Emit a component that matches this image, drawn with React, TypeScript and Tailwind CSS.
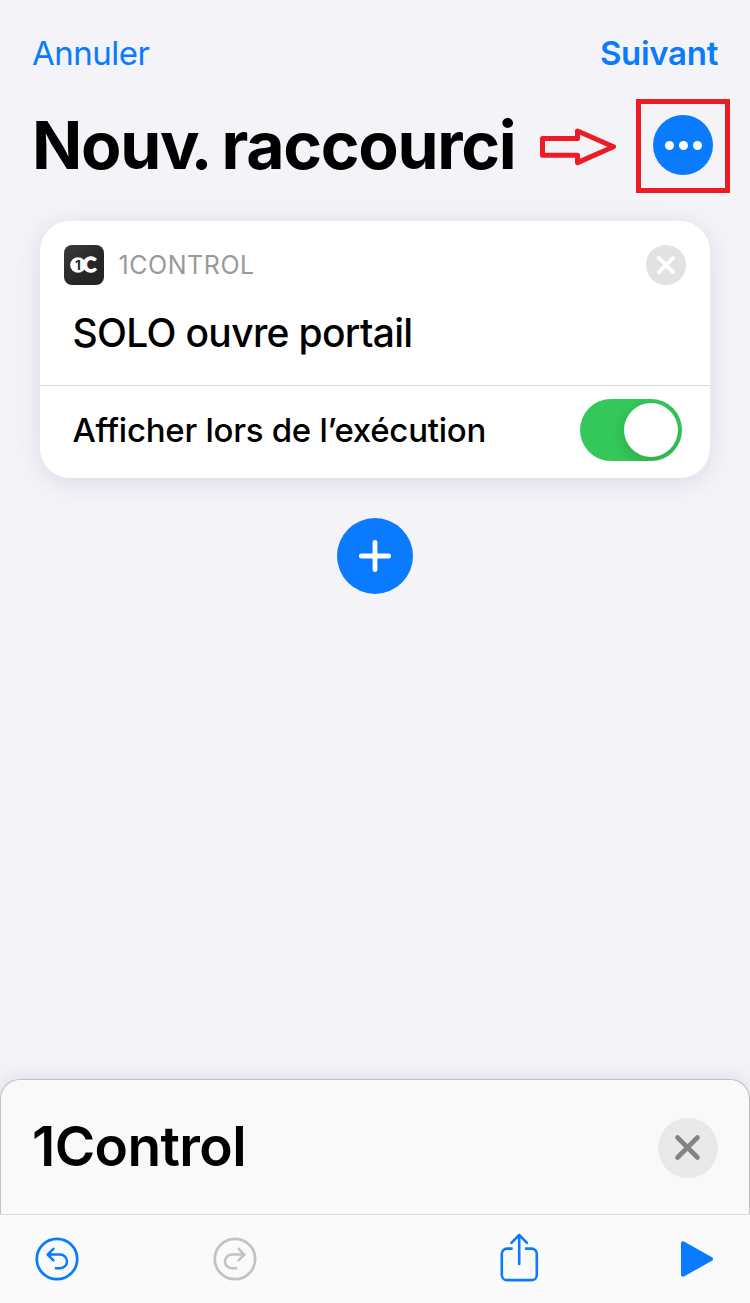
import { useState } from "react";

function AppIcon() {
  return (
    <svg viewBox="0 0 40 40" className="h-10 w-10 shrink-0">
      <defs>
        <linearGradient id="iconBg" x1="0" y1="0" x2="1" y2="1">
          <stop offset="0" stopColor="#3b3b3b" />
          <stop offset="0.6" stopColor="#262626" />
          <stop offset="1" stopColor="#232323" />
        </linearGradient>
      </defs>
      <rect width="40" height="40" rx="8" fill="url(#iconBg)" />
      <text x="18.8" y="27.3" fontFamily="Lato, sans-serif" fontWeight="700" fontSize="20.5" fill="#fff" stroke="#fff" strokeWidth="1.3">
        C
      </text>
      <circle cx="14" cy="20" r="7.8" fill="#fff" />
      <text x="13.8" y="24.9" textAnchor="middle" fontFamily="Inter, sans-serif" fontWeight="700" fontSize="13.5" fill="#262626">
        1
      </text>
    </svg>
  );
}

function Arrow() {
  return (
    <svg viewBox="0 0 76 40" className="h-10 w-[76px]" fill="none">
      <path d="M2.5 12.5h35V5l36 15.7-36 15.9v-7.4h-35z" stroke="#ed1c24" strokeWidth="5" strokeLinejoin="round" />
    </svg>
  );
}

function UndoIcon({ className }: { className?: string }) {
  return (
    <svg viewBox="0 0 44 44" className={className} fill="none" stroke="currentColor" strokeLinecap="round" strokeLinejoin="round">
      <circle cx="22" cy="22" r="20.2" strokeWidth="2.7" />
      <path d="M18.4 11.8 12.6 17.6l5.8 5.8M12.9 17.6h12.3a6.8 6.8 0 0 1 0 13.6h-4.3" strokeWidth="2.5" />
    </svg>
  );
}

export default function App() {
  const [showWhenRun, setShowWhenRun] = useState(true);

  return (
    <div className="flex h-[1303px] w-[750px] flex-col overflow-hidden bg-[#f3f3f8] font-['Inter',sans-serif] text-black">
      {/* Nav */}
      <header className="flex h-[99px] items-center justify-between px-8 pt-[9px] text-[33px] text-[#0a7aff]">
        <button className="tracking-[-0.5px]">Annuler</button>
        <button className="font-semibold tracking-[-0.3px]">Suivant</button>
      </header>

      <div className="flex h-[94px] items-center pr-5 pl-8">
        <h1 className="pb-0.5 text-[66px] font-bold tracking-[-1.3px] whitespace-nowrap [word-spacing:-2px]">
          Nou<span className="tracking-[-9px]">v</span>. raccourci
        </h1>
        <div className="ml-auto flex shrink-0 items-center gap-5">
          <Arrow />
          <div className="flex h-[94px] w-[94px] justify-center border-5 border-[#ed1c24] pt-[11px]">
            <button className="flex h-15 w-15 shrink-0 items-center justify-center gap-[5px] rounded-full bg-[#0a7aff]">
              <span className="h-[9px] w-[9px] rounded-full bg-white" />
              <span className="h-[9px] w-[9px] rounded-full bg-white" />
              <span className="h-[9px] w-[9px] rounded-full bg-white" />
            </button>
          </div>
        </div>
      </div>

      <main className="flex flex-1 flex-col items-center pt-7">
        {/* Action card */}
        <section className="h-[257px] w-[670px] rounded-[30px] bg-white shadow-[0_4px_24px_rgba(40,40,80,0.12)]">
          <div className="h-[165px] border-b border-[#d9d9dc] px-6 pt-6">
            <div className="flex h-10 items-center">
              <AppIcon />
              <span className="mt-0.5 ml-[14.5px] text-[25px] tracking-[0.55px] text-[#999]">1CONTROL</span>
              <button className="ml-auto">
                <svg viewBox="0 0 40 40" className="h-10 w-10">
                  <circle cx="20" cy="20" r="20" fill="#e2e2e4" />
                  <path d="M12.9 12.9l14.2 14.2M27.1 12.9L12.9 27.1" stroke="#fff" strokeWidth="3.8" strokeLinecap="round" />
                </svg>
              </button>
            </div>
            <p className="mt-5 ml-[8.5px] text-[39px] leading-[56px] font-medium tracking-[-0.67px] whitespace-nowrap">SOLO ouvre portail</p>
          </div>
          <div className="flex h-[88px] items-center justify-between pr-7 pl-[32.5px]">
            <span className="mt-0.5 text-[33px] font-medium tracking-[-0.26px] whitespace-nowrap">Afficher lors de l’exécution</span>
            <button
              onClick={() => setShowWhenRun(!showWhenRun)}
              className={`flex h-[62px] w-[102px] items-center overflow-hidden rounded-full p-1 ${
                showWhenRun ? "justify-end bg-[#34c759]" : "justify-start bg-[#e9e9eb]"
              }`}
            >
              <span className="h-[54px] w-[54px] rounded-full bg-white shadow-[0_5px_14px_rgba(0,0,0,0.14)]" />
            </button>
          </div>
        </section>

        <button className="mt-10 h-[76px] w-[76px] rounded-full bg-[#0a7aff]">
          <svg viewBox="0 0 76 76" className="h-full w-full">
            <path d="M38 24.3v27.4M24.3 38h27.4" stroke="#fff" strokeWidth="4.8" strokeLinecap="round" />
          </svg>
        </button>
      </main>

      {/* Bottom sheet */}
      <section className="flex h-[135px] items-center justify-between rounded-t-[20px] border border-b-0 border-[#c0c0c4] bg-[#f9f9f9] pr-[31px] pl-[31px] shadow-[0_0_20px_rgba(40,40,80,0.13)]">
        <h2 className="pb-0.5 text-[55px] font-semibold tracking-[-0.6px] whitespace-nowrap">1Control</h2>
        <button className="mt-0.5">
          <svg viewBox="0 0 60 60" className="h-15 w-15">
            <circle cx="30" cy="30" r="30" fill="#e9e9ea" />
            <path d="M19.5 19.5l20 20M39.5 19.5l-20 20" stroke="#828287" strokeWidth="4.6" strokeLinecap="round" />
          </svg>
        </button>
      </section>

      <nav className="flex h-[89px] items-center border-t border-[#dadadc] bg-[#fafafa] pr-9 pl-[34.5px] text-[#0a7aff]">
        <UndoIcon className="h-11 w-11" />
        <UndoIcon className="ml-[134px] h-11 w-11 -scale-x-100 text-[#c2c2c3]" />
        <svg viewBox="0 0 40 50" className="-mt-[5px] ml-[242.5px] h-[50px] w-10" fill="none" stroke="currentColor" strokeWidth="2.6" strokeLinecap="round" strokeLinejoin="round">
          <path d="M13.7 16.6H8a5.2 5.2 0 0 0-5.2 5.2v21.1A5.2 5.2 0 0 0 8 48.1h24.6a5.2 5.2 0 0 0 5.2-5.2V21.8a5.2 5.2 0 0 0-5.2-5.2h-6.5" strokeLinecap="butt" />
          <path d="M20.2 32V3M12.4 10.8l7.8-7.8 7.8 7.8" />
        </svg>
        <svg viewBox="0 0 34 38" className="ml-auto h-[38px] w-[34px]" fill="currentColor" stroke="currentColor" strokeWidth="4" strokeLinejoin="round">
          <path d="M3 3.3v31.4L31 19z" />
        </svg>
      </nav>
    </div>
  );
}
